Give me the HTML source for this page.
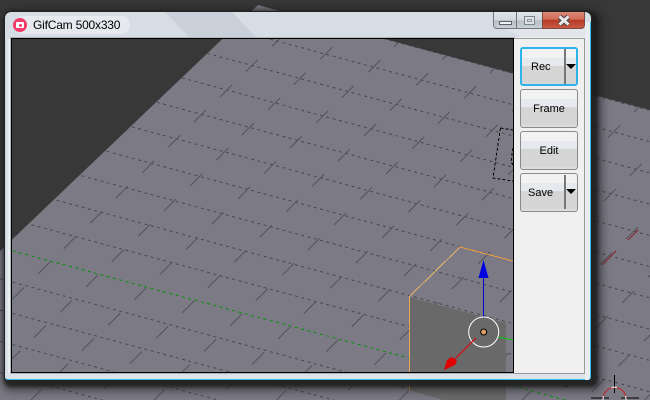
<!DOCTYPE html>
<html><head><meta charset="utf-8"><style>
html,body{margin:0;padding:0;background:#383838;overflow:hidden}
#p{position:relative;width:650px;height:400px;overflow:hidden;background:#383838;font-family:"Liberation Sans",sans-serif}
#p div{position:absolute;box-sizing:border-box}
svg{position:absolute;left:0;top:0}
.b{left:520px;width:58px;height:39px;border:1.5px solid #8a8a8a;border-radius:3px;background:linear-gradient(#f2f2f2 0,#f2f2f2 9px,#e6e9ed 9px,#e6e9ed 17px,#d5d5d5 17px,#d5d5d5 34px,#dedede 36px);font-size:11px;line-height:38px;text-align:center;color:#000;overflow:hidden}
.s{left:43px;top:1px;width:2px;height:34px;background:#777}
.a{left:44.5px;top:15px;width:0;height:0;border-left:5px solid transparent;border-right:5px solid transparent;border-top:5px solid #000}
</style></head><body><div id="p">
<svg width="650" height="400" viewBox="0 0 650 400">
<defs>
<clipPath id="c"><path d="M258 5L650 110V400H0V251Z"/></clipPath>
<line id="l" x1="0" y1="0" x2="650" y2="175.5" stroke="#4a4a52" stroke-width="1" stroke-dasharray="3 3.5"/>
<path id="r" fill="none" stroke="#55555d" stroke-width="1" d="M-96-26l-12 12m60 1l-12 12m60 1l-12 12m60 1l-12 12m60 1l-12 12m60 1l-12 12m60 1l-12 12m60 1l-12 12m60 1l-12 12m60 1l-12 12m60 1l-12 12m60 1l-12 12m60 1l-12 12m60 1l-12 12m60 1l-12 12"/>
</defs>
<path d="M258 5L650 110V400H0V251Z" fill="#7b7a85"/>
<g clip-path="url(#c)" shape-rendering="crispEdges">
<use href="#l" y="-65"/><use href="#l" y="-33.75"/><use href="#l" y="-2.5"/><use href="#l" y="28.75"/><use href="#l" y="60"/><use href="#l" y="91.25"/><use href="#l" y="122.5"/><use href="#l" y="153.75"/><use href="#l" y="185"/><use href="#l" y="216.25"/>
<use href="#l" y="278.75"/><use href="#l" y="310"/><use href="#l" y="341.25"/><use href="#l" y="372.5"/><use href="#l" y="403.75"/>
<use href="#r" x="-54" y="363"/><use href="#r" x="-28" y="338"/><use href="#r" x="-2" y="312.6"/><use href="#r" x="24" y="287.3"/><use href="#r" x="50" y="262"/><use href="#r" x="76" y="236.7"/><use href="#r" x="102" y="211.4"/><use href="#r" x="128" y="186.1"/><use href="#r" x="154" y="160.8"/><use href="#r" x="180" y="135.5"/><use href="#r" x="206" y="110.2"/><use href="#r" x="232" y="84.9"/><use href="#r" x="258" y="59.6"/><use href="#r" x="284" y="34.3"/><use href="#r" x="310" y="9"/>
<line x1="0" y1="247.5" x2="409" y2="358" stroke="#0a8f0a" stroke-dasharray="3 3.5"/>
<line x1="506" y1="384" x2="650" y2="423" stroke="#0a8f0a" stroke-dasharray="3 3.5"/>
</g>
<path d="M409 297L506 323V400H443L409 390Z" fill="#696969"/>
<g shape-rendering="crispEdges">
<line x1="409" y1="297" x2="460" y2="247" stroke="#e8b46a"/>
<line x1="460" y1="247" x2="513" y2="261" stroke="#f0a040"/>
<line x1="409.5" y1="297" x2="409.5" y2="390" stroke="#e8a858"/>
<line x1="498" y1="337" x2="513" y2="340" stroke="#10c010"/>
<path d="M500.5 128L513 130M500.5 128L493 178L513 181M513 148L511 162L513 165" fill="none" stroke="#000" stroke-dasharray="3 2"/>
<line x1="566.5" y1="381" x2="566.5" y2="388" stroke="#000" stroke-dasharray="2 2"/>
<line x1="628" y1="240" x2="638" y2="230" stroke="#8a2030"/>
<line x1="602" y1="265" x2="616" y2="251" stroke="#8a2030"/>
<line x1="614.5" y1="375" x2="614.5" y2="393" stroke="#000"/>
<line x1="591" y1="398" x2="609" y2="398" stroke="#000"/>
<line x1="621" y1="398" x2="639" y2="398" stroke="#000"/>
</g>
<path d="M603 399A11.5 11.5 0 0 1 626 399" fill="none" stroke="#d02020"/>
<path d="M611.5 387.5A11.5 11.5 0 0 1 617 387.5M603.3 396L603 400M625.7 396L626 400" fill="none" stroke="#fff"/>
<line x1="483.5" y1="278" x2="483.5" y2="317" stroke="#0000c8"/>
<path d="M483.5 260L488.5 278H478.5Z" fill="#0000e0"/>
<circle cx="483.7" cy="332" r="15" fill="none" stroke="#fff"/>
<circle cx="483.7" cy="332" r="3" fill="#e0a060" stroke="#000"/>
<line x1="476" y1="338" x2="454" y2="360" stroke="#e00000"/>
<path d="M444 370L447 360L452 357L457 361L455 365Z" fill="#e00000"/>
</svg>

<!-- window shadow: transparent box leaves the capture hole clear -->
<div style="left:5px;top:12px;width:586px;height:368px;border-radius:6px 6px 3px 3px;box-shadow:0 0 0 1px #222,3px 3px 3px 4px rgba(28,28,28,.8),4px 4px 9px 7px rgba(30,30,30,.55)"></div>

<!-- frame strips -->
<div style="left:5px;top:12px;width:586px;height:27px;border-radius:6px 6px 0 0;background:#d6dde5"></div>
<svg width="650" height="400" viewBox="0 0 650 400"><path d="M165 12H232L257 38H190Z" fill="#c9d0d9"/><path d="M505 29H591V38H525Z" fill="#e2e6eb"/><line x1="11" y1="37.5" x2="585" y2="37.5" stroke="#eef1f4"/></svg>
<div style="left:14px;top:16px;width:116px;height:18px;border-radius:9px;background:#e6eaee"></div>
<div style="left:5px;top:39px;width:7px;height:341px;background:linear-gradient(90deg,#ccd3da,#eef1f4 60%,#dde3e8);border-radius:0 0 0 3px"></div>
<div style="left:5px;top:373px;width:586px;height:7px;background:#dce2e8;border-bottom:1px solid #2fbdea;border-radius:0 0 3px 3px"></div>
<div style="left:585px;top:22px;width:6px;height:358px;background:#e9edf1;border-right:1px solid #2fbdea;border-radius:0 0 3px 0"></div>

<!-- capture border -->
<div style="left:11px;top:38px;width:503px;height:335px;border:1px solid #000;box-shadow:0 0 0 1px rgba(140,145,150,.6)"></div>

<!-- side panel -->
<div style="left:514px;top:38px;width:71px;height:336px;background:#f0f0f0;border:1px solid #9a9a9a;border-left:0"></div>
<div class="b" style="top:47px;border:2px solid #2fb4ea;text-align:left;padding-left:9px;line-height:37px">Rec<div class="s" style="left:42px;top:0;height:35px"></div><div class="a" style="left:43.5px;top:15px"></div></div>
<div class="b" style="top:89px">Frame</div>
<div class="b" style="top:131px">Edit</div>
<div class="b" style="top:173px;text-align:left;padding-left:7px">Save<div class="s"></div><div class="a"></div></div>

<!-- title -->
<div style="left:13px;top:18px;width:14px;height:14px;border-radius:50%;background:#f23c6c"></div>
<div style="left:16px;top:22px;width:8px;height:6px;background:#fff;border-radius:1px"></div>
<div style="left:18.5px;top:23.5px;width:3px;height:3px;background:#f23c6c;border-radius:50%"></div>
<div style="left:33px;top:17px;font-size:12px;line-height:16px;letter-spacing:-.2px;color:#000;white-space:nowrap">GifCam 500x330</div>

<!-- caption buttons -->
<div style="left:493px;top:12px;width:24px;height:17px;border:1px solid #6e7780;border-top:0;border-radius:0 0 0 4px;background:linear-gradient(#dfe4e8 0,#d2d8dd 50%,#b7bfc6 55%,#c9d0d6 100%)"></div>
<div style="left:499px;top:21px;width:13px;height:4px;border:1px solid #59626a;background:#eef1f3"></div>
<div style="left:517px;top:12px;width:25px;height:17px;border-bottom:1px solid #6e7780;background:linear-gradient(#dfe4e8 0,#d2d8dd 50%,#b7bfc6 55%,#c9d0d6 100%)"></div>
<div style="left:524px;top:16px;width:11px;height:9px;border:1px solid #7c858d;background:#dce1e5;box-shadow:inset 0 0 0 2px #dce1e5,inset 0 0 0 3px #8d959c"></div>
<div style="left:542px;top:12px;width:43px;height:17px;border:1px solid #7a4a40;border-top:0;border-radius:0 0 4px 0;background:linear-gradient(#dd8a78 0,#d06a55 45%,#b83c28 52%,#c85a44 100%)"></div>
<svg width="650" height="400" viewBox="0 0 650 400" style="pointer-events:none"><path d="M559.5 16.5L568.5 24.5M568.5 16.5L559.5 24.5" stroke="#444" stroke-width="5" fill="none"/><path d="M559.5 16.5L568.5 24.5M568.5 16.5L559.5 24.5" stroke="#e8e8e8" stroke-width="3" fill="none"/></svg>
</div></body></html>
